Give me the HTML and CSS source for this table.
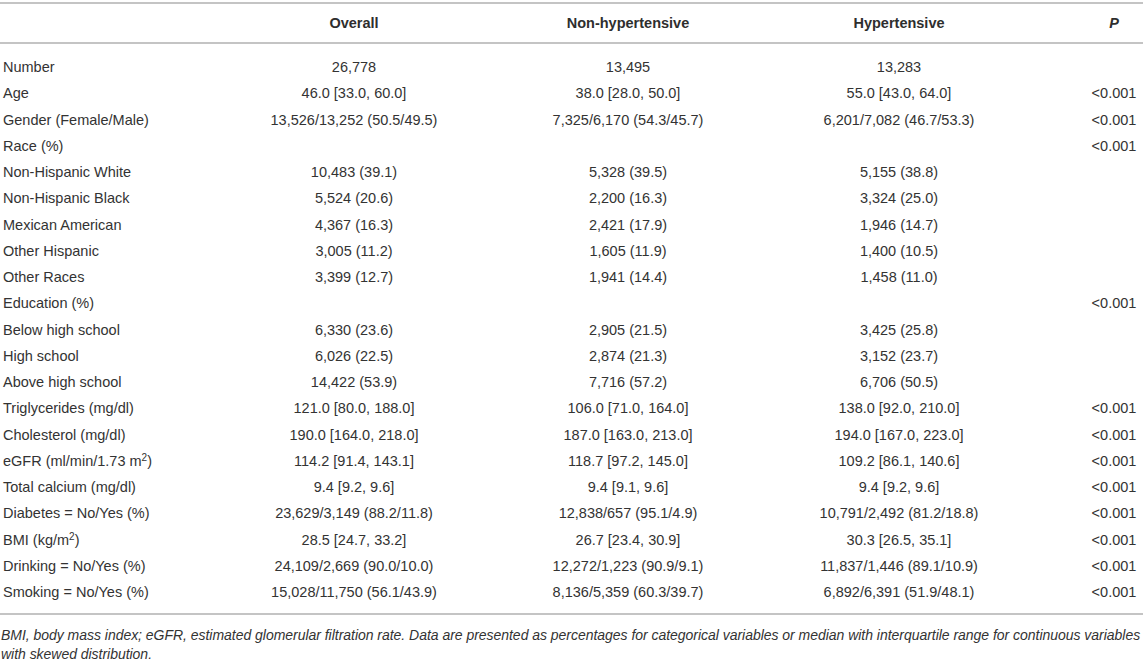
FILE: index.html
```html
<!DOCTYPE html>
<html lang="en">
<head>
<meta charset="utf-8">
<title>Table</title>
<link rel="stylesheet" href="styles.css">
</head>
<body>
<div class="wrap">
<table class="data">
<colgroup>
<col class="c-label"><col class="c-overall"><col class="c-non"><col class="c-hyp"><col class="c-p">
</colgroup>
<thead>
<tr><th class="label"></th><th>Overall</th><th>Non-hypertensive</th><th>Hypertensive</th><th class="p"><i>P</i></th></tr>
</thead>
<tbody>
<tr class="first"><td class="label">Number</td><td>26,778</td><td>13,495</td><td>13,283</td><td class="p"></td></tr>
<tr><td class="label">Age</td><td>46.0 [33.0, 60.0]</td><td>38.0 [28.0, 50.0]</td><td>55.0 [43.0, 64.0]</td><td class="p">&lt;0.001</td></tr>
<tr><td class="label">Gender (Female/Male)</td><td>13,526/13,252 (50.5/49.5)</td><td>7,325/6,170 (54.3/45.7)</td><td>6,201/7,082 (46.7/53.3)</td><td class="p">&lt;0.001</td></tr>
<tr><td class="label">Race (%)</td><td></td><td></td><td></td><td class="p">&lt;0.001</td></tr>
<tr><td class="label">Non-Hispanic White</td><td>10,483 (39.1)</td><td>5,328 (39.5)</td><td>5,155 (38.8)</td><td class="p"></td></tr>
<tr><td class="label">Non-Hispanic Black</td><td>5,524 (20.6)</td><td>2,200 (16.3)</td><td>3,324 (25.0)</td><td class="p"></td></tr>
<tr><td class="label">Mexican American</td><td>4,367 (16.3)</td><td>2,421 (17.9)</td><td>1,946 (14.7)</td><td class="p"></td></tr>
<tr><td class="label">Other Hispanic</td><td>3,005 (11.2)</td><td>1,605 (11.9)</td><td>1,400 (10.5)</td><td class="p"></td></tr>
<tr><td class="label">Other Races</td><td>3,399 (12.7)</td><td>1,941 (14.4)</td><td>1,458 (11.0)</td><td class="p"></td></tr>
<tr><td class="label">Education (%)</td><td></td><td></td><td></td><td class="p">&lt;0.001</td></tr>
<tr><td class="label">Below high school</td><td>6,330 (23.6)</td><td>2,905 (21.5)</td><td>3,425 (25.8)</td><td class="p"></td></tr>
<tr><td class="label">High school</td><td>6,026 (22.5)</td><td>2,874 (21.3)</td><td>3,152 (23.7)</td><td class="p"></td></tr>
<tr><td class="label">Above high school</td><td>14,422 (53.9)</td><td>7,716 (57.2)</td><td>6,706 (50.5)</td><td class="p"></td></tr>
<tr><td class="label">Triglycerides (mg/dl)</td><td>121.0 [80.0, 188.0]</td><td>106.0 [71.0, 164.0]</td><td>138.0 [92.0, 210.0]</td><td class="p">&lt;0.001</td></tr>
<tr><td class="label">Cholesterol (mg/dl)</td><td>190.0 [164.0, 218.0]</td><td>187.0 [163.0, 213.0]</td><td>194.0 [167.0, 223.0]</td><td class="p">&lt;0.001</td></tr>
<tr><td class="label">eGFR (ml/min/1.73 m<sup>2</sup>)</td><td>114.2 [91.4, 143.1]</td><td>118.7 [97.2, 145.0]</td><td>109.2 [86.1, 140.6]</td><td class="p">&lt;0.001</td></tr>
<tr><td class="label">Total calcium (mg/dl)</td><td>9.4 [9.2, 9.6]</td><td>9.4 [9.1, 9.6]</td><td>9.4 [9.2, 9.6]</td><td class="p">&lt;0.001</td></tr>
<tr><td class="label">Diabetes = No/Yes (%)</td><td>23,629/3,149 (88.2/11.8)</td><td>12,838/657 (95.1/4.9)</td><td>10,791/2,492 (81.2/18.8)</td><td class="p">&lt;0.001</td></tr>
<tr><td class="label">BMI (kg/m<sup>2</sup>)</td><td>28.5 [24.7, 33.2]</td><td>26.7 [23.4, 30.9]</td><td>30.3 [26.5, 35.1]</td><td class="p">&lt;0.001</td></tr>
<tr><td class="label">Drinking = No/Yes (%)</td><td>24,109/2,669 (90.0/10.0)</td><td>12,272/1,223 (90.9/9.1)</td><td>11,837/1,446 (89.1/10.9)</td><td class="p">&lt;0.001</td></tr>
<tr class="last"><td class="label">Smoking = No/Yes (%)</td><td>15,028/11,750 (56.1/43.9)</td><td>8,136/5,359 (60.3/39.7)</td><td>6,892/6,391 (51.9/48.1)</td><td class="p">&lt;0.001</td></tr>
</tbody>
</table>
<p class="note">BMI, body mass index; eGFR, estimated glomerular filtration rate. Data are presented as percentages for categorical variables or median with interquartile range for continuous variables with skewed distribution.</p>
</div>
</body>
</html>
```

FILE: styles.css
```css
html, body {
  margin: 0;
  padding: 0;
  background: #ffffff;
}

.wrap {
  width: 1143px;
  padding-top: 2px;
  font-family: "Liberation Sans", Arial, sans-serif;
  font-size: 14.5px;
  color: #333333;
}

.data {
  width: 1143px;
  border-collapse: collapse;
  table-layout: fixed;
  border-top: 2px solid #c4c4c4;
  border-bottom: 2px solid #c4c4c4;
}

.c-label { width: 230px; }
.c-overall { width: 248px; }
.c-non { width: 300px; }
.c-hyp { width: 242px; }
.c-p { width: 123px; }

.data th {
  height: 38px;
  padding: 0;
  font-weight: bold;
  text-align: center;
  vertical-align: middle;
  border-bottom: 2px solid #c4c4c4;
  color: #2e2e2e;
}

.data td {
  padding: 0;
  height: 26.25px;
  line-height: 26.25px;
  text-align: center;
  white-space: nowrap;
}

.data .label {
  text-align: left;
  padding-left: 3px;
}

.data .p {
  padding-left: 65px;
  text-align: center;
}

.data tr.first td {
  padding-top: 10px;
}

.data tr.last td {
  padding-bottom: 8px;
}

.data sup {
  font-size: 10px;
  line-height: 0;
  vertical-align: 5px;
}

.note {
  margin: 0;
  padding: 11px 0 0 1px;
  font-style: italic;
  font-size: 14px;
  letter-spacing: -0.03px;
  line-height: 19px;
}
```
